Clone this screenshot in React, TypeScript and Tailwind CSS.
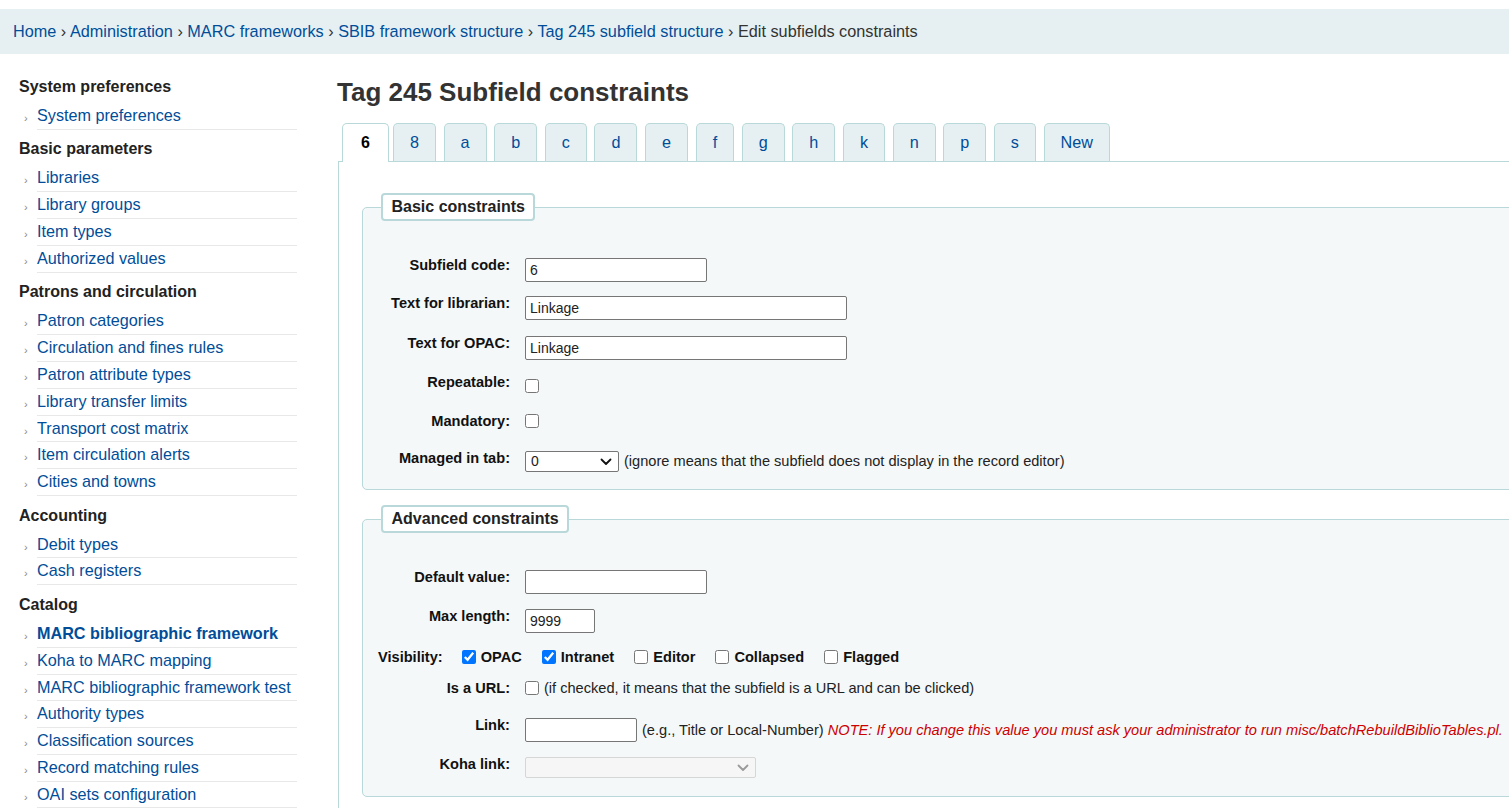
import React from 'react';

const font = { fontFamily: '"Liberation Sans", Arial, sans-serif' };

interface NavGroup {
  title: string;
  items: string[];
}

const nav: NavGroup[] = [
  { title: 'System preferences', items: ['System preferences'] },
  { title: 'Basic parameters', items: ['Libraries', 'Library groups', 'Item types', 'Authorized values'] },
  {
    title: 'Patrons and circulation',
    items: [
      'Patron categories',
      'Circulation and fines rules',
      'Patron attribute types',
      'Library transfer limits',
      'Transport cost matrix',
      'Item circulation alerts',
      'Cities and towns',
    ],
  },
  { title: 'Accounting', items: ['Debit types', 'Cash registers'] },
  {
    title: 'Catalog',
    items: [
      'MARC bibliographic framework',
      'Koha to MARC mapping',
      'MARC bibliographic framework test',
      'Authority types',
      'Classification sources',
      'Record matching rules',
      'OAI sets configuration',
    ],
  },
];

const crumbs = [
  'Home',
  'Administration',
  'MARC frameworks',
  'SBIB framework structure',
  'Tag 245 subfield structure',
];

const tabs = ['6', '8', 'a', 'b', 'c', 'd', 'e', 'f', 'g', 'h', 'k', 'n', 'p', 's', 'New'];

function Chevron({ disabled }: { disabled?: boolean }) {
  return (
    <svg width="12" height="8" viewBox="0 0 12 8" fill="none">
      <polyline
        points="1.5,1.5 6,6 10.5,1.5"
        stroke={disabled ? '#9a9a9a' : '#111'}
        strokeWidth="1.8"
        strokeLinecap="round"
        strokeLinejoin="round"
      />
    </svg>
  );
}

function TextInput({ value, width }: { value?: string; width: string }) {
  return (
    <input
      type="text"
      defaultValue={value}
      className={`${width} h-[24px] border border-[#767676] rounded-[2px] bg-white px-[4px] text-[14px] text-[#222] outline-none`}
    />
  );
}

function Check({ checked }: { checked?: boolean }) {
  return <input type="checkbox" defaultChecked={checked} className="w-[14px] h-[14px] m-0 shrink-0" />;
}

function Row({ label, height, children }: { label: string; height: string; children: React.ReactNode }) {
  return (
    <div className={`flex items-start ${height}`}>
      <label className="w-[129px] mr-[15px] text-right font-bold text-[14.6px] leading-[15px] text-[#111] whitespace-nowrap">
        {label}
      </label>
      <div className="flex items-start">{children}</div>
    </div>
  );
}

function Legend({ children }: { children: React.ReactNode }) {
  return (
    <legend className="h-[28px] border-2 border-[#b9d8d9] rounded-[4px] bg-white px-[8.5px] font-bold text-[16px] leading-[24px] text-[#222]">
      {children}
    </legend>
  );
}

export default function App() {
  return (
    <div style={font} className="w-[1509px] h-[808px] overflow-hidden bg-white text-[#333]">
      {/* Breadcrumbs */}
      <div className="mt-[9px] h-[45px] bg-[#e6f0f2] px-[13px] text-[16.25px] leading-[45px] whitespace-nowrap">
        {crumbs.map((c) => (
          <React.Fragment key={c}>
            <span className="text-[#004d99]">{c}</span>
            {' › '}
          </React.Fragment>
        ))}
        <span className="text-[#333]">Edit subfields constraints</span>
      </div>

      <div className="flex">
        {/* Sidebar */}
        <aside className="w-[337px] shrink-0 pl-[19px] pt-[23px]">
          {nav.map((g, gi) => (
            <div key={g.title} className={gi === 0 ? '' : 'mt-[9.7px]'}>
              <h5 className="font-bold text-[16px] leading-[20px] text-[#222] mb-[6px]">{g.title}</h5>
              <ul>
                {g.items.map((it) => (
                  <li key={it} className="flex h-[26.8px]">
                    <span className="w-[18px] pl-[5px] pt-[2px] text-[11px] leading-[26px] text-[#888]">›</span>
                    <span
                      className={`w-[260px] border-b border-[#e8e8e8] text-[16.2px] leading-[25.8px] text-[#004d99] whitespace-nowrap ${
                        it === 'MARC bibliographic framework' ? 'font-bold' : ''
                      }`}
                    >
                      {it}
                    </span>
                  </li>
                ))}
              </ul>
            </div>
          ))}
        </aside>

        {/* Main */}
        <main className="w-[1200px] shrink-0 pt-[23px]">
          <h1 className="text-[26px] leading-[30px] font-bold text-[#333] mb-[16px]">Tag 245 Subfield constraints</h1>

          <div className="flex items-end pl-[4px] ml-[1px]">
            {tabs.map((t, i) =>
              i === 0 ? (
                <div
                  key={t}
                  className="h-[39px] -mb-px px-[18px] mr-[4px] flex items-center border border-b-0 border-[#b9d8d9] rounded-t-[5px] bg-white font-bold text-black text-[16px]"
                >
                  {t}
                </div>
              ) : (
                <div
                  key={t}
                  className="h-[38px] px-[16px] mr-[7.6px] flex items-center border border-b-0 border-[#b9d8d9] rounded-t-[5px] bg-[#e6f0f2] text-[#004d99] text-[16.2px]"
                >
                  {t}
                </div>
              )
            )}
          </div>

          <div className="ml-[1px] border-t border-l border-[#b9d8d9] pl-[23px] pt-[31px] pb-[40px]">
            {/* Basic constraints */}
            <fieldset className="border border-[#b9d8d9] rounded-[5px] bg-[#f4f8f9] px-[18px] pb-[18px]">
              <Legend>Basic constraints</Legend>
              <div className="pt-[37px]">
                <Row label="Subfield code:" height="h-[38px]">
                  <TextInput value="6" width="w-[182px]" />
                </Row>
                <Row label="Text for librarian:" height="h-[40px]">
                  <TextInput value="Linkage" width="w-[322px]" />
                </Row>
                <Row label="Text for OPAC:" height="h-[39px]">
                  <TextInput value="Linkage" width="w-[322px]" />
                </Row>
                <Row label="Repeatable:" height="h-[38.5px]">
                  <span className="pt-[1px]">
                    <Check />
                  </span>
                </Row>
                <Row label="Mandatory:" height="h-[37.5px]">
                  <Check />
                </Row>
                <Row label="Managed in tab:" height="h-[20px]">
                  <div className="w-[94px] h-[21px] border border-[#767676] rounded-[2px] bg-white flex items-center justify-between pl-[5px] pr-[6px] text-[14px] text-[#222]">
                    <span>0</span>
                    <Chevron />
                  </div>
                  <span className="ml-[5px] text-[14.6px] leading-[21px] text-[#222] whitespace-nowrap">
                    (ignore means that the subfield does not display in the record editor)
                  </span>
                </Row>
              </div>
            </fieldset>

            {/* Advanced constraints */}
            <fieldset className="mt-[15px] border border-[#b9d8d9] rounded-[5px] bg-[#f4f8f9] px-[18px] pb-[19px]">
              <Legend>Advanced constraints</Legend>
              <div className="pt-[37px]">
                <Row label="Default value:" height="h-[39px]">
                  <TextInput width="w-[182px]" />
                </Row>
                <Row label="Max length:" height="h-[40.5px]">
                  <TextInput value="9999" width="w-[70px]" />
                </Row>
                <div className="h-[31px] flex items-start -ml-[3px] text-[14.6px] leading-[15px] font-bold text-[#111] whitespace-nowrap">
                  <span className="mr-[19px]">Visibility:</span>
                  {[
                    ['OPAC', true],
                    ['Intranet', true],
                    ['Editor', false],
                    ['Collapsed', false],
                    ['Flagged', false],
                  ].map(([l, c]) => (
                    <span key={l as string} className="flex items-start mr-[20px]">
                      <Check checked={c as boolean} />
                      <span className="ml-[5px]">{l as string}</span>
                    </span>
                  ))}
                </div>
                <Row label="Is a URL:" height="h-[37.5px]">
                  <Check />
                  <span className="ml-[5px] text-[14.6px] leading-[15px] text-[#222] whitespace-nowrap">
                    (if checked, it means that the subfield is a URL and can be clicked)
                  </span>
                </Row>
                <Row label="Link:" height="h-[39px]">
                  <TextInput width="w-[112px]" />
                  <span className="ml-[5px] text-[14.6px] leading-[24px] text-[#222] whitespace-nowrap">
                    (e.g., Title or Local-Number){' '}
                    <em className="text-[#cc0000]">
                      NOTE: If you change this value you must ask your administrator to run
                      misc/batchRebuildBiblioTables.pl.
                    </em>
                  </span>
                </Row>
                <Row label="Koha link:" height="h-[20px]">
                  <div className="w-[231px] h-[21px] border border-[#d6d6d6] rounded-[2px] bg-[#f6f6f6] flex items-center justify-end pr-[6px]">
                    <Chevron disabled />
                  </div>
                </Row>
              </div>
            </fieldset>
          </div>
        </main>
      </div>
    </div>
  );
}
